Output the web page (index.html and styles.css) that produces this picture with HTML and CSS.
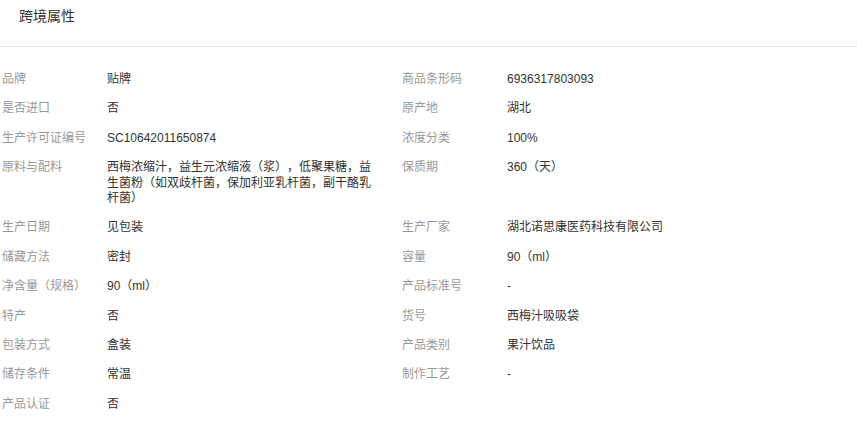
FILE: index.html
```html
<!DOCTYPE html>
<html lang="zh-CN">
<head>
<meta charset="utf-8">
<title>跨境属性</title>
<link rel="stylesheet" href="styles.css">
</head>
<body>
<section class="panel">
  <div class="panel-head">跨境属性</div>
  <div class="attr-grid">
    <div class="attr"><span class="attr-label">品牌</span><span class="attr-value">贴牌</span></div>
    <div class="attr"><span class="attr-label">商品条形码</span><span class="attr-value">6936317803093</span></div>
    <div class="attr"><span class="attr-label">是否进口</span><span class="attr-value">否</span></div>
    <div class="attr"><span class="attr-label">原产地</span><span class="attr-value">湖北</span></div>
    <div class="attr"><span class="attr-label">生产许可证编号</span><span class="attr-value">SC10642011650874</span></div>
    <div class="attr"><span class="attr-label">浓度分类</span><span class="attr-value">100%</span></div>
    <div class="attr"><span class="attr-label">原料与配料</span><span class="attr-value">西梅浓缩汁，益生元浓缩液（浆），低聚果糖，益生菌粉（如双歧杆菌，保加利亚乳杆菌，副干酪乳杆菌）</span></div>
    <div class="attr"><span class="attr-label">保质期</span><span class="attr-value">360（天）</span></div>
    <div class="attr"><span class="attr-label">生产日期</span><span class="attr-value">见包装</span></div>
    <div class="attr"><span class="attr-label">生产厂家</span><span class="attr-value">湖北诺思康医药科技有限公司</span></div>
    <div class="attr"><span class="attr-label">储藏方法</span><span class="attr-value">密封</span></div>
    <div class="attr"><span class="attr-label">容量</span><span class="attr-value">90（ml）</span></div>
    <div class="attr"><span class="attr-label">净含量（规格）</span><span class="attr-value">90（ml）</span></div>
    <div class="attr"><span class="attr-label">产品标准号</span><span class="attr-value">-</span></div>
    <div class="attr"><span class="attr-label">特产</span><span class="attr-value">否</span></div>
    <div class="attr"><span class="attr-label">货号</span><span class="attr-value">西梅汁吸吸袋</span></div>
    <div class="attr"><span class="attr-label">包装方式</span><span class="attr-value">盒装</span></div>
    <div class="attr"><span class="attr-label">产品类别</span><span class="attr-value">果汁饮品</span></div>
    <div class="attr"><span class="attr-label">储存条件</span><span class="attr-value">常温</span></div>
    <div class="attr"><span class="attr-label">制作工艺</span><span class="attr-value">-</span></div>
    <div class="attr"><span class="attr-label">产品认证</span><span class="attr-value">否</span></div>
  </div>
</section>
</body>
</html>
```

FILE: styles.css
```css
html, body {
  margin: 0;
  padding: 0;
  background: #fff;
}

body {
  font-family: "Liberation Sans", Arial, "Noto Sans CJK SC", sans-serif;
  font-size: 12px;
  color: #333;
  text-spacing-trim: space-all;
}

.panel-head {
  font-size: 14px;
  line-height: 20px;
  color: #333;
  padding: 6px 19px 20px;
  border-bottom: 1px solid #e8e8e8;
}

.attr-grid {
  display: grid;
  grid-template-columns: 400px 400px;
  padding-top: 18px;
}

.attr {
  display: flex;
  align-items: flex-start;
  padding: 7px 0 7px 2px;
  line-height: 15.4px;
}

.attr-label {
  flex: 0 0 105px;
  color: #999;
}

.attr-value {
  width: 270px;
  color: #333;
}
```
